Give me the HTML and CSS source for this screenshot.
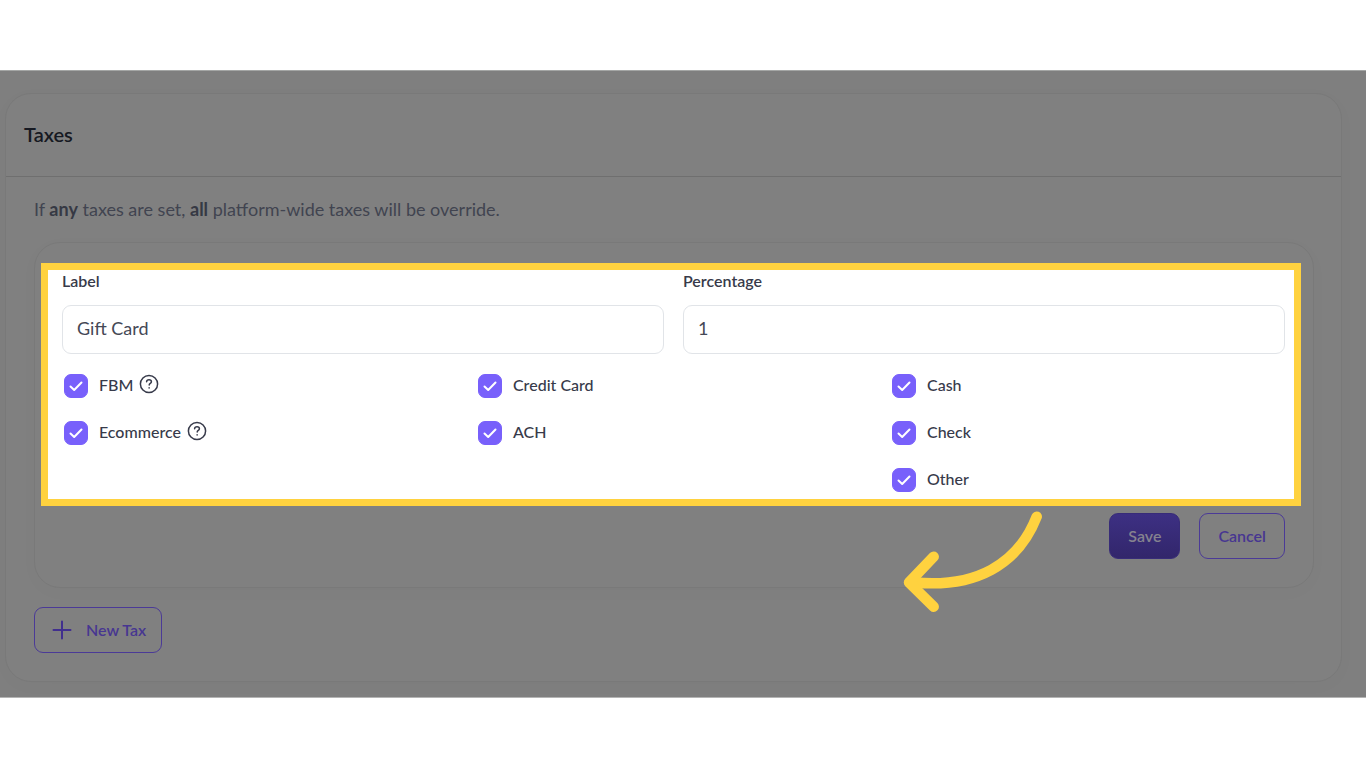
FILE: index.html
```
<!DOCTYPE html>
<html lang="en">

<head>
    <meta charset="UTF-8">
    <meta name="viewport" content="width=device-width, initial-scale=1">
    <title>Taxes</title>
    <link rel="stylesheet" href="styles.css">
</head>

<body>

    <main class="stage">
        <section class="card">
            <div class="card-header">
                <h1>Taxes</h1>
            </div>
            <div class="card-body">
                <p class="notice">If <strong>any</strong> taxes are set, <strong>all</strong> platform-wide taxes will be override.</p>

                <form class="tax-form">
                    <div class="highlight">
                        <div class="fields">
                            <div class="field">
                                <label for="label">Label</label>
                                <input type="text" id="label" name="label" value="Gift Card">
                            </div>
                            <div class="field">
                                <label for="percentage">Percentage</label>
                                <input type="text" id="percentage" name="percentage" value="1">
                            </div>
                        </div>

                        <div class="options">
                            <div class="option-column">
                                <div class="option">
                                    <input type="checkbox" id="fbm" checked>
                                    <label for="fbm">FBM</label>
                                    <svg class="help" viewBox="0 0 20 20" aria-hidden="true">
                                        <circle cx="10" cy="10" r="8.6" />
                                        <path d="M7.6 7.8C7.7 6.3 8.7 5.7 10 5.7C11.4 5.7 12.4 6.5 12.4 7.8C12.4 9.4 10.2 9.4 10.2 11" />
                                        <path d="M10.1 13.8V14" />
                                    </svg>
                                </div>
                                <div class="option">
                                    <input type="checkbox" id="ecommerce" checked>
                                    <label for="ecommerce">Ecommerce</label>
                                    <svg class="help" viewBox="0 0 20 20" aria-hidden="true">
                                        <circle cx="10" cy="10" r="8.6" />
                                        <path d="M7.6 7.8C7.7 6.3 8.7 5.7 10 5.7C11.4 5.7 12.4 6.5 12.4 7.8C12.4 9.4 10.2 9.4 10.2 11" />
                                        <path d="M10.1 13.8V14" />
                                    </svg>
                                </div>
                            </div>
                            <div class="option-column">
                                <div class="option">
                                    <input type="checkbox" id="credit" checked>
                                    <label for="credit">Credit Card</label>
                                </div>
                                <div class="option">
                                    <input type="checkbox" id="ach" checked>
                                    <label for="ach">ACH</label>
                                </div>
                            </div>
                            <div class="option-column">
                                <div class="option">
                                    <input type="checkbox" id="cash" checked>
                                    <label for="cash">Cash</label>
                                </div>
                                <div class="option">
                                    <input type="checkbox" id="check" checked>
                                    <label for="check">Check</label>
                                </div>
                                <div class="option">
                                    <input type="checkbox" id="other" checked>
                                    <label for="other">Other</label>
                                </div>
                            </div>
                        </div>

                        <svg class="arrow" viewBox="0 0 140 102" aria-hidden="true">
                            <path d="M133.7 6.7C115 55 72 78 12 72.5" />
                            <path d="M30.7 46.7L6 72.5L30.7 96.7" />
                        </svg>
                    </div>

                    <div class="actions">
                        <button type="submit" class="btn btn-save">Save</button>
                        <button type="button" class="btn btn-cancel">Cancel</button>
                    </div>
                </form>

                <button type="button" class="btn btn-new">
                    <svg class="plus" viewBox="0 0 20 20" aria-hidden="true">
                        <path d="M10 1.5V18.5M1.5 10H18.5" />
                    </svg>
                    New Tax
                </button>
            </div>
        </section>
    </main>

</body>

</html>
```
FILE: styles.css
```
* {
    box-sizing: border-box;
}

body {
    margin: 0;
    padding: 70px 0;
    background: #fff;
    color: #373a4a;
    font-family: Lato, "Open Sans", sans-serif;
    font-size: 16px;
    line-height: 24px;
}

/* dimmed page */
.stage {
    padding: 22px 24px 15px 5px;
    background: #7f7f7f;
    border-top: 1px solid #a4a6a5;
    border-bottom: 1px solid #b4b4b4;
}

.card {
    border: 1px solid #797979;
    border-radius: 26px;
    background: #808080;
    box-shadow: 0 4px 20px rgba(0, 0, 0, 0.02);
}

.card-header {
    padding: 28px 18px 30px;
    border-bottom: 1px solid #6f6f6f;
}

.card-header h1 {
    margin: 0;
    color: #161922;
    font-size: 20px;
    line-height: 24px;
    font-weight: 600;
}

.card-body {
    padding: 20px 27px 28px 28px;
}

.notice {
    margin: 0 0 21px;
    color: #414450;
    font-size: 18px;
    line-height: 24px;
}

.notice strong {
    color: #363944;
}

.tax-form {
    padding: 20px 12px 28px 6px;
    border: 1px solid #797979;
    border-radius: 26px;
    box-shadow: 0 4px 20px rgba(0, 0, 0, 0.02);
}

/* spotlighted part of the form */
.highlight {
    position: relative;
    padding: 0 9px 0 14px;
    border: 7px solid #ffd23f;
    background: #fff;
}

.fields {
    display: grid;
    grid-template-columns: 1fr 1fr;
    gap: 19px;
}

.field label {
    display: block;
    margin-bottom: 13px;
    line-height: 22px;
    font-weight: 600;
}

.field input {
    display: block;
    width: 100%;
    height: 49px;
    padding: 0 14px 3px;
    border: 1px solid #e1e4e8;
    border-radius: 9px;
    background: #fff;
    color: #454856;
    font-family: inherit;
    font-size: 18px;
}

.options {
    display: grid;
    grid-template-columns: repeat(3, 1fr);
    gap: 19px;
    padding: 20px 0 7px;
}

.option-column {
    display: flex;
    flex-direction: column;
    gap: 23px;
    padding-left: 2px;
}

.option {
    display: flex;
    align-items: center;
    height: 24px;
}

.option label {
    padding-bottom: 2px;
    font-weight: 500;
}

.option input {
    appearance: none;
    width: 24px;
    height: 24px;
    margin: 0 11px 0 0;
    border-radius: 7px;
    background: #fff;
    border: 1px solid #7860fb;
}

.option input:checked {
    background: #7860fb url("data:image/svg+xml,%3Csvg xmlns='http://www.w3.org/2000/svg' viewBox='0 0 24 24' fill='none' stroke='white' stroke-width='2' stroke-linecap='round' stroke-linejoin='round'%3E%3Cpath d='M6.5 12.5L10.2 16L17.5 8.5'/%3E%3C/svg%3E") center / 24px 24px no-repeat;
}

.help {
    width: 20px;
    height: 20px;
    margin: 0 0 4px 6px;
    fill: none;
    stroke: #373a4a;
    stroke-width: 1.5;
    stroke-linecap: round;
}

.arrow {
    position: absolute;
    top: 240px;
    right: 251px;
    width: 140px;
    height: 102px;
    fill: none;
    stroke: #ffd23f;
    stroke-width: 10.5;
    stroke-linecap: round;
    stroke-linejoin: round;
}

.actions {
    display: flex;
    justify-content: flex-end;
    gap: 19px;
    margin: 7px 16px 0 0;
}

.btn {
    height: 46px;
    padding: 0 18px 2px;
    border: 1px solid #4b3a97;
    border-radius: 9px;
    background: transparent;
    color: #473691;
    font-family: inherit;
    font-size: 16px;
    font-weight: 600;
    cursor: pointer;
}

.btn-save {
    border-color: #382c78;
    background: linear-gradient(#3d3083, #32266b);
    color: #85828f;
}

.btn-new {
    display: flex;
    align-items: center;
    gap: 14px;
    margin-top: 19px;
    padding: 0 15px 1px 17px;
}

.plus {
    width: 20px;
    height: 20px;
    fill: none;
    stroke: #412f8e;
    stroke-width: 2;
    stroke-linecap: round;
}
```
